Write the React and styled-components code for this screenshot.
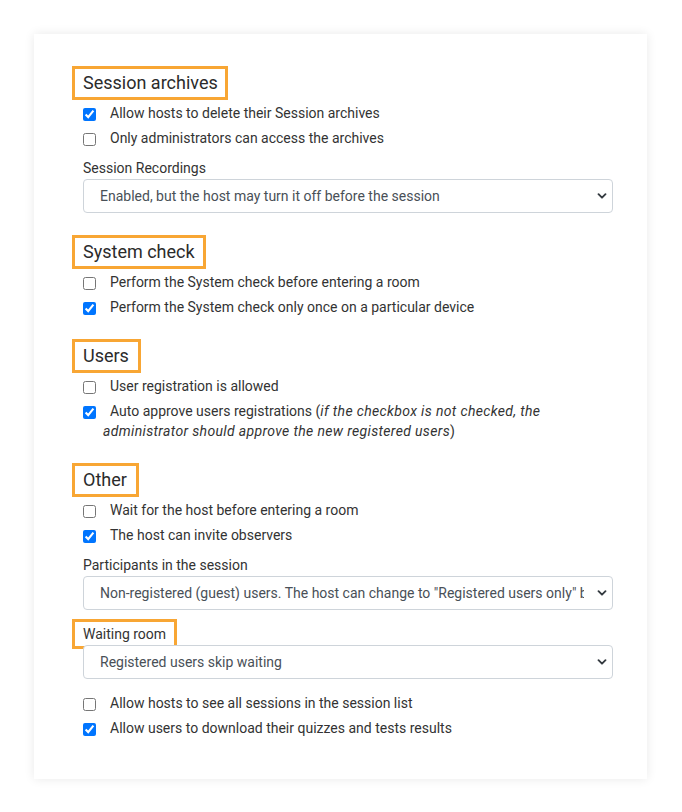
import styled, { createGlobalStyle } from "styled-components";

const GlobalStyle = createGlobalStyle`
  body {
    margin: 0;
    background: #fff;
    font-family: Roboto, "Liberation Sans", Arial, sans-serif;
    color: #333;
  }
`;

const Page = styled.div`
  padding: 34px 35px 34px 34px;
`;

const Card = styled.div`
  background: #fff;
  box-shadow: 0 0 10px rgba(0, 0, 0, 0.09);
  padding: 37px 34px 41px 49px;
`;

const Section = styled.section`
  & + & {
    margin-top: 27px;
  }
`;

const Heading = styled.h3`
  margin: 0 0 8px;
  font-size: 18px;
  line-height: 24px;
  font-weight: 400;
  color: #2b2b2b;
`;

// orange annotation frame, drawn over the text without taking space
const Marked = styled.span`
  position: relative;
  display: inline-block;

  &::after {
    content: "";
    position: absolute;
    top: -5px;
    bottom: -5px;
    left: -11px;
    right: ${(p) => p.$right ?? -11}px;
    border: 3px solid #f8a634;
    pointer-events: none;
  }
`;

const Check = styled.div`
  padding-left: 20px;
  font-size: 14px;
  line-height: 20px;
  color: #333;

  & + & {
    margin-top: 5px;
  }
`;

const Box = styled.input`
  float: left;
  width: 13px;
  height: 13px;
  margin: 5px 0 0 -20px;
`;

const CheckText = styled.span`
  padding-left: 7px;

  em {
    font-style: italic;
    letter-spacing: 0.35px;
  }
`;

const Field = styled.div`
  margin-top: ${(p) => p.$top}px;
`;

const FieldLabel = styled.div`
  font-size: 14px;
  line-height: 20px;
  color: #333;
  margin-bottom: 1px;
`;

const SelectWrap = styled.div`
  position: relative;
`;

const Select = styled.select`
  display: block;
  width: 100%;
  height: 34px;
  appearance: none;
  background: #fff;
  border: 1px solid #ced4da;
  border-radius: 4px;
  padding: 0 28px 0 16px;
  font-family: Roboto, "Liberation Sans", Arial, sans-serif;
  font-size: 14px;
  color: #495057;
  outline: none;
`;

const Chevron = styled.svg`
  position: absolute;
  right: 6px;
  top: 12px;
  width: 10px;
  height: 10px;
  pointer-events: none;
`;

const Checks = styled.div`
  margin-top: ${(p) => p.$top || 8}px;
`;

function CheckRow({ checked, children }) {
  return (
    <Check>
      <Box type="checkbox" defaultChecked={checked} />
      <CheckText>{children}</CheckText>
    </Check>
  );
}

function SelectField({ label, value, top, marked }) {
  return (
    <Field $top={top}>
      <FieldLabel>{marked ? <Marked $right={-11}>{label}</Marked> : label}</FieldLabel>
      <SelectWrap>
        <Select defaultValue={value}>
          <option value={value}>{value}</option>
        </Select>
        <Chevron viewBox="0 0 10 10">
          <path
            d="M1.5 3.2 L5 6.7 L8.5 3.2"
            fill="none"
            stroke="#343a40"
            strokeWidth="1.9"
            strokeLinecap="round"
            strokeLinejoin="round"
          />
        </Chevron>
      </SelectWrap>
    </Field>
  );
}

export default function App() {
  return (
    <Page>
      <GlobalStyle />
      <Card>
        <Section>
          <Heading>
            <Marked $right={-10}>Session archives</Marked>
          </Heading>
          <CheckRow checked>Allow hosts to delete their Session archives</CheckRow>
          <CheckRow>Only administrators can access the archives</CheckRow>
          <SelectField
            top={10}
            label="Session Recordings"
            value="Enabled, but the host may turn it off before the session"
          />
        </Section>

        <Section>
          <Heading>
            <Marked $right={-11}>System check</Marked>
          </Heading>
          <CheckRow>Perform the System check before entering a room</CheckRow>
          <CheckRow checked>Perform the System check only once on a particular device</CheckRow>
        </Section>

        <Section>
          <Heading>
            <Marked $right={-12}>Users</Marked>
          </Heading>
          <CheckRow>User registration is allowed</CheckRow>
          <CheckRow checked>
            Auto approve users registrations (
            <em>
              if the checkbox is not checked, the administrator should approve the new
              registered users
            </em>
            )
          </CheckRow>
        </Section>

        <Section>
          <Heading>
            <Marked $right={-12}>Other</Marked>
          </Heading>
          <CheckRow>Wait for the host before entering a room</CheckRow>
          <CheckRow checked>The host can invite observers</CheckRow>
          <SelectField
            top={10}
            label="Participants in the session"
            value={'Non-registered (guest) users. The host can change to "Registered users only" before the session'}
          />
          <SelectField top={14} marked label="Waiting room" value="Registered users skip waiting" />
          <Checks $top={14}>
            <CheckRow>Allow hosts to see all sessions in the session list</CheckRow>
            <CheckRow checked>Allow users to download their quizzes and tests results</CheckRow>
          </Checks>
        </Section>
      </Card>
    </Page>
  );
}
